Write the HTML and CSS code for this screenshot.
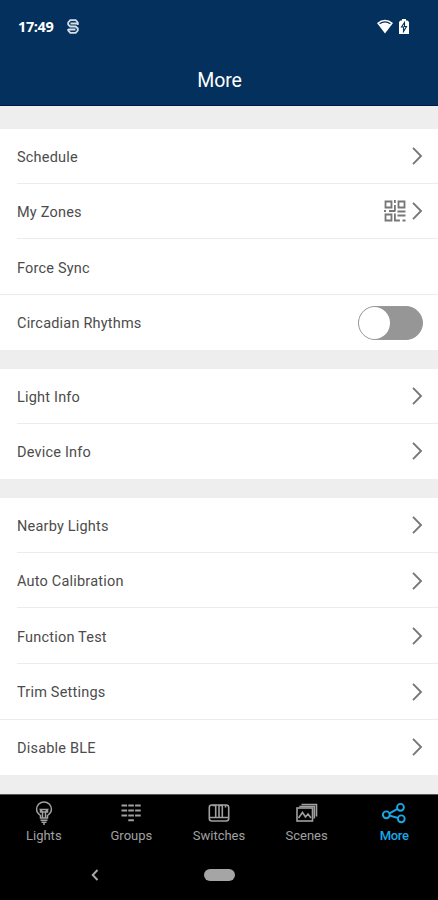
FILE: index.html
```html
<!DOCTYPE html>
<html lang="en">
<head>
<meta charset="utf-8">
<title>More</title>
<link rel="stylesheet" href="styles.css">
</head>
<body>
<svg width="0" height="0" class="defs"><symbol id="chev" viewBox="0 0 12 20"><path d="M2 1.800 10 10 2 18.200" fill="none" stroke="#777" stroke-width="1.900"/></symbol></svg>
<div class="app">
  <header class="top">
    <div class="status">
      <span class="time">17:49</span>
      <svg class="s-icon" width="12" height="15" viewBox="0 0 12 15" fill="none" stroke="#d5dde6" stroke-width="1.800"><path d="M10.800 5V3.500L8.700 1.200H3.300L1.200 3.500V5.500L3.300 7.500H8.700L10.800 9.500V11.500L8.700 13.800H3.300L1.200 11.500V10M3.500 4.500H10.800V6M1.200 10.500H8.500"/></svg>
      <svg class="wifi" width="16" height="15" viewBox="0 0 16 15"><path d="M0 4Q8-2.500 16 4L8 14.500z" fill="#fff"/><path d="M2.600 4.700Q8 1 13.400 4.700" fill="none" stroke="#03305c" stroke-width="1.100"/></svg>
      <svg class="batt" width="10" height="15" viewBox="0 0 10 15"><path d="M3 0h4v1.500h1.500L10 3v12H0V3l1.500-1.500H3z" fill="#fff"/><path d="M5.500 3.500 2.500 8h2v4.500l3-5h-2z" fill="none" stroke="#03305c" stroke-width="1.100"/></svg>
    </div>
    <h1 class="title">More</h1>
  </header>
  <main class="list">
    <section class="group">
      <div class="row"><span>Schedule</span><svg class="chev"><use href="#chev"/></svg></div>
      <div class="row"><span>My Zones</span>
        <svg class="qr" width="22" height="22" viewBox="0 0 22 22" fill="none" stroke="#777" stroke-width="1.800"><path d="M1.500 1.500h6v6h-6zM14.500 1.500h6v6h-6zM1.500 14.500h6v6h-6zM10.900 0v3M10.900 5v6.500M0 11h2M5 11h6M13.500 11.500H21.500M10.900 13.500V20.500h5M13.500 15.500H21.500M18.500 20.500H21.500"/></svg>
        <svg class="chev"><use href="#chev"/></svg></div>
      <div class="row full"><span>Force Sync</span></div>
      <div class="row"><span>Circadian Rhythms</span><div class="toggle"><div class="knob"></div></div></div>
    </section>
    <section class="group">
      <div class="row"><span>Light Info</span><svg class="chev"><use href="#chev"/></svg></div>
      <div class="row"><span>Device Info</span><svg class="chev"><use href="#chev"/></svg></div>
    </section>
    <section class="group">
      <div class="row"><span>Nearby Lights</span><svg class="chev"><use href="#chev"/></svg></div>
      <div class="row"><span>Auto Calibration</span><svg class="chev"><use href="#chev"/></svg></div>
      <div class="row"><span>Function Test</span><svg class="chev"><use href="#chev"/></svg></div>
      <div class="row full"><span>Trim Settings</span><svg class="chev"><use href="#chev"/></svg></div>
      <div class="row"><span>Disable BLE</span><svg class="chev"><use href="#chev"/></svg></div>
    </section>
  </main>
  <nav class="tabs">
    <div class="tab"><svg width="24" height="26" viewBox="0 0 24 26" fill="none" stroke="currentColor" stroke-width="1.500"><path d="M8.500 18v-2.500C6 13.800 4.600 11.800 4.600 9.300a7.400 7.400 0 0 1 14.800 0c0 2.500-1.400 4.500-3.900 6.200V18zM8.500 20.300h7M9.500 22.300h5M11 24h2M10.500 18v-6L8.500 9.500h7L13.500 12v6M8.500 9.500v2.500h7V9.500"/></svg><span>Lights</span></div>
    <div class="tab"><svg width="24" height="26" viewBox="0 0 24 26" fill="none" stroke="currentColor" stroke-width="2"><path d="M2.500 5.500h5.600M9.300 5.500h5.600M16.100 5.500h5.600M2.500 10.500h5.600M9.300 10.500h5.600M16.100 10.500h5.600M2.500 15.500h5.600M9.300 15.500h5.600M16.100 15.500h5.600M9.300 20.300h5.600"/></svg><span>Groups</span></div>
    <div class="tab"><svg width="24" height="26" viewBox="0 0 24 26" fill="none" stroke="currentColor" stroke-width="1.600"><rect x="2.300" y="5" width="19.400" height="16" rx="2.500"/><path d="M2.500 17.500h19M5.500 5.500h3.200v12M8.700 7.500v10M12 5.500h3.300v12M12 5v12.500M18.500 5v2.500"/></svg><span>Switches</span></div>
    <div class="tab"><svg width="24" height="26" viewBox="0 0 24 26" fill="none" stroke="currentColor" stroke-width="1.600"><rect x="2" y="8" width="15.500" height="13"/><path d="M4.300 6.500h15V18.500M6.500 4.500h15V16.500M3.500 18 7.500 12.500l3 4.500 2.500-3 3 4"/></svg><span>Scenes</span></div>
    <div class="tab active"><svg width="24" height="26" viewBox="0 0 24 26" fill="none" stroke="currentColor" stroke-width="1.900"><circle cx="4.300" cy="14.800" r="3.400"/><circle cx="18.500" cy="7.300" r="3.400"/><circle cx="19.300" cy="18.800" r="3.400"/><path d="m7.500 13.300 8-4.500M7.800 15.700l8.200 2.300"/></svg><span>More</span></div>
  </nav>
  <div class="sysnav">
    <svg class="back" width="8" height="12" viewBox="0 0 8 12"><path d="M6.500 1 1.700 6l4.800 5" fill="none" stroke="#aaa" stroke-width="1.900"/></svg>
    <div class="home"></div>
  </div>
</div>
</body>
</html>
```
FILE: styles.css
```css
* { box-sizing: border-box; }
body { margin: 0; font-family: Roboto, "Liberation Sans", sans-serif; background: #eee; }
.defs { display: block; height: 0; }
.app { width: 438px; height: 900px; display: flex; flex-direction: column; overflow: hidden; }
.top { height: 106px; flex: none; background: #03305c; border-bottom: 1px solid #04174d; color: #fff; }
.status { height: 53px; padding: 0 29px 0 18px; display: flex; align-items: center; }
.time { font: 700 14.500px "Open Sans", sans-serif; letter-spacing: -.4px; width: 49px; }
.wifi { margin-left: auto; margin-right: 6px; }
.title { margin: 14px 0 0; padding-left: 1px; text-align: center; font-size: 19.500px; line-height: 28px; font-weight: 400; letter-spacing: -.1px; }
.list { flex: none; height: 688px; padding-top: 22.500px; background: #eee; }
.group { background: #fff; margin-bottom: 19px; }
.group:first-child { margin-bottom: 18.500px; }
.row { height: 55.600px; display: flex; align-items: center; margin-left: 17px; padding-right: 15px; border-bottom: 1px solid #ececec; font-size: 14.500px; line-height: 18px; color: #4c4c4c; letter-spacing: .2px; }
.row:first-child { height: 54.600px; }
.group:first-child .row:first-child { height: 55.200px; }
.row:last-child { border-bottom-color: transparent; }
.row span { margin-right: auto; padding-top: 4px; }
.row > svg, .toggle { position: relative; top: .5px; }
.row.full { margin-left: 0; padding-left: 17px; }
.chev { width: 12px; height: 20px; }
.qr { margin-right: 5px; }
.toggle { width: 65px; height: 34px; border-radius: 17px; background: #969696; border: 1px solid #999; }
.knob { width: 31px; height: 32px; border-radius: 50%; background: #fff; }
.tabs { flex: none; height: 56px; background: #000; border-top: 1px solid #555; display: grid; grid-template-columns: repeat(5, 1fr); color: #a0a0a0; }
.tab { display: flex; flex-direction: column; align-items: center; padding-top: 5px; font-size: 13px; line-height: 16px; letter-spacing: 0; }
.tab span { margin-top: 2px; }
.tab.active { color: #18a9e6; }
.tab.active span { font-weight: 500; letter-spacing: -.3px; }
.sysnav { flex: 1; background: #000; display: flex; align-items: center; padding-left: 91px; }
.home { width: 31px; height: 12px; border-radius: 6px; background: #a5a5a5; margin-left: 105px; }
```
